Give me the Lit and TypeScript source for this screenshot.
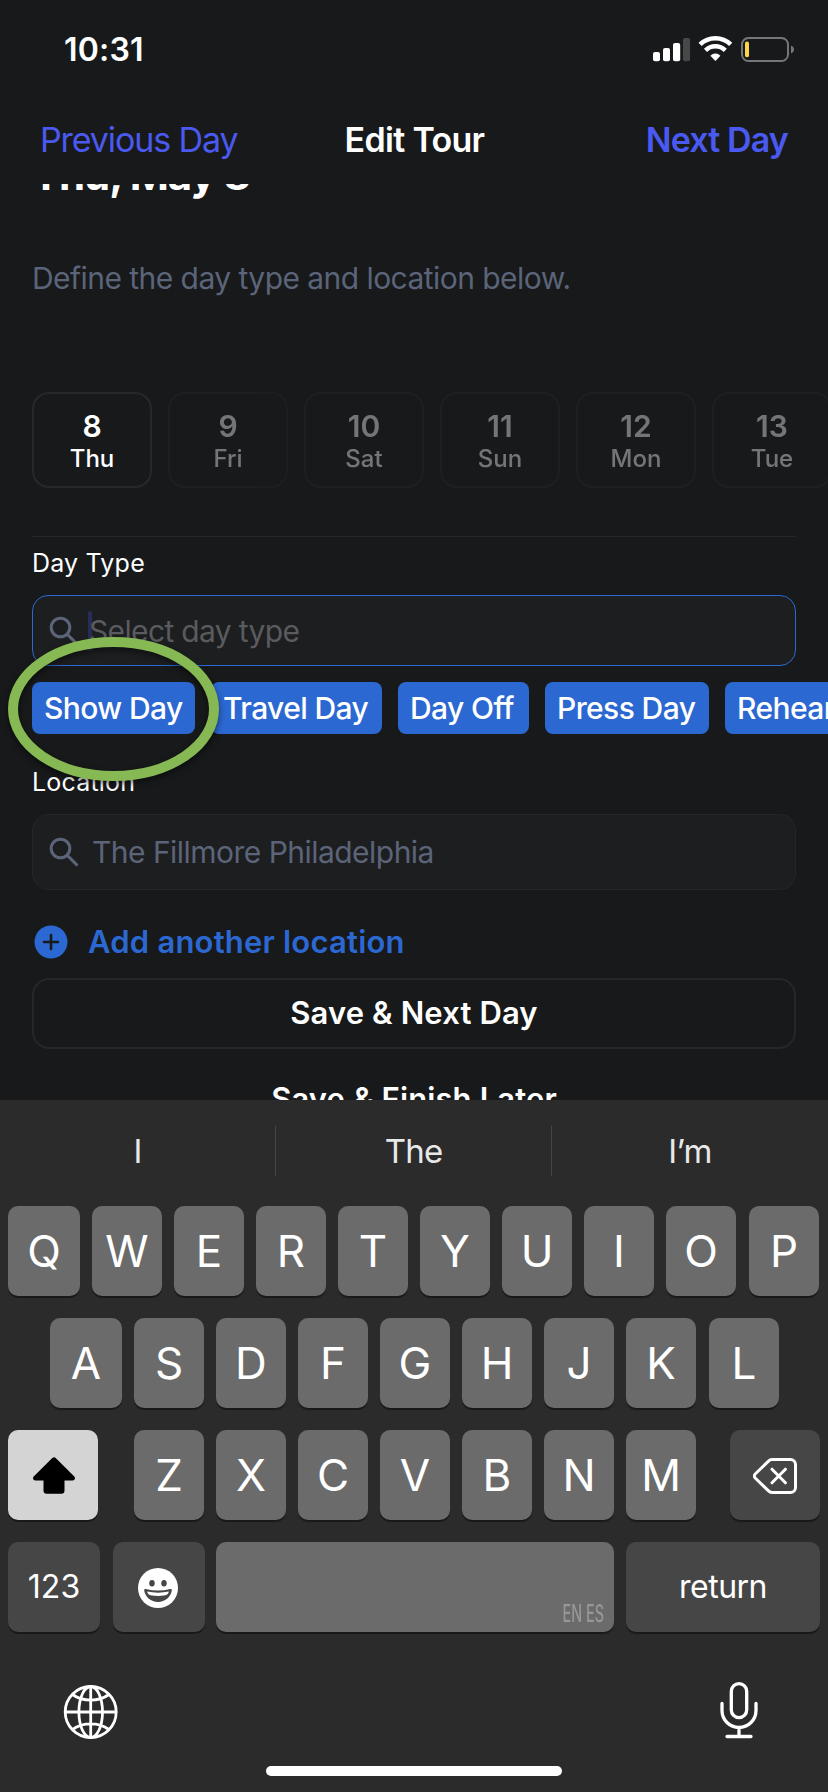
import { LitElement, html, css } from "lit";
import { customElement } from "lit/decorators.js";
import { classMap } from "lit/directives/class-map.js";

const searchIcon = html`<svg class="search" width="30" height="30" viewBox="0 0 30 30" fill="none" stroke="#5b6479" stroke-width="3" stroke-linecap="round">
  <circle cx="11.5" cy="11.5" r="9.3"></circle><path d="M18.2 18.2 27.6 27.6"></path>
</svg>`;

@customElement("tour-screen")
export class TourScreen extends LitElement {
  static styles = css`
    :host { display: flex; flex-direction: column; height: 1100px; overflow: hidden; background: #17191a; color: #fff; }
    * { box-sizing: border-box; }
    svg { display: block; flex: none; }
    .status { display: flex; align-items: center; justify-content: space-between; height: 100px; padding: 0 33px 0 64px; flex: none; }
    .time { font-size: 32px; font-weight: 600; letter-spacing: 0.2px; line-height: 40px; }
    .nav { display: grid; grid-template-columns: 1fr auto 1fr; align-items: center; height: 84px; flex: none; padding: 0 40px 4px; font-size: 34px; line-height: 44px; font-weight: 600; }
    .prev { color: #4a5af0; font-weight: 400; letter-spacing: -1.1px; }
    .title { letter-spacing: -0.7px; padding-left: 1px; }
    .next { color: #4a5af0; letter-spacing: -0.88px; text-align: right; }
    .body { flex: 1; min-height: 0; overflow: hidden; padding-left: 32px; }
    .date { margin-top: -29px; font-size: 42px; font-weight: 700; line-height: 40px; letter-spacing: -1.05px; }
    .hint { margin-top: 63px; font-size: 30px; line-height: 41px; letter-spacing: -0.55px; color: #5b6479; }
    .days { display: flex; gap: 16px; margin-top: 93px; }
    .day { flex: none; width: 120px; height: 96px; border: 2px solid #262829; border-radius: 17px; padding-top: 16px; text-align: center; font-weight: 500; font-size: 24px; line-height: 32px; opacity: 0.4; }
    .day b { display: block; font-size: 30px; font-weight: 600; line-height: 33px; }
    .day.on { opacity: 1; }
    .rule { width: 764px; height: 1px; margin-top: 48px; background: #252728; }
    .label { margin-top: 10px; font-size: 25px; line-height: 32px; letter-spacing: 0.2px; }
    .label.loc { margin-top: 32px; }
    .field { display: flex; align-items: center; width: 764px; height: 71px; margin-top: 16px; padding-left: 16px; border: 1px solid #2c68d2; border-radius: 16px; background: #1d1e20; font-size: 30px; line-height: 40px; }
    .field.tall { height: 76px; border-color: #242628; color: #5b6479; letter-spacing: -0.53px; }
    .field.tall span { margin-left: 13px; }
    .field.focus { color: #5a5b5e; letter-spacing: -0.65px; }
    .caret { width: 4px; height: 40px; margin-left: 9px; margin-right: -3px; border-radius: 2px; background: #272d57; }
    .chips { display: flex; gap: 16px; margin-top: 16px; }
    .chip { flex: none; height: 52px; border-radius: 8px; background: #2c68d2; font-size: 30px; font-weight: 500; line-height: 52px; white-space: nowrap; letter-spacing: -0.6px; padding-left: 12px; }
    .add { display: flex; align-items: center; gap: 20px; height: 40px; margin-top: 32px; padding-left: 2px; color: #2c68d2; font-size: 31px; font-weight: 580; line-height: 40px; letter-spacing: 0.2px; }
    .btn { width: 764px; height: 71px; margin-top: 16px; border: 2px solid #252729; border-radius: 17px; text-align: center; font-size: 31px; line-height: 66px; font-weight: 600; letter-spacing: 0.12px; }
    .btn.plain { border-color: transparent; margin-top: 15px; }
    .ring { position: absolute; left: 0; top: 629px; filter: drop-shadow(0 3px 3px rgba(0, 0, 0, 0.5)); }
  `;
  days: [number, string][] = [[8, "Thu"], [9, "Fri"], [10, "Sat"], [11, "Sun"], [12, "Mon"], [13, "Tue"]];
  chips: [string, number][] = [["Show Day", 163], ["Travel Day", 171], ["Day Off", 131], ["Press Day", 164], ["Rehearsal", 160]];
  render() {
    return html`
      <div class="status">
        <span class="time">10:31</span>
        <svg width="144" height="30" viewBox="0 0 144 30">
          <g fill="#fff">
            <rect x="2" y="17" width="7" height="9.3" rx="2"></rect>
            <rect x="12" y="13" width="7" height="13.3" rx="2"></rect>
            <rect x="22" y="8" width="7.2" height="18.3" rx="2"></rect>
            <rect x="32" y="3" width="7" height="23.3" rx="2" fill="#47484a"></rect>
          </g>
          <g fill="none" stroke="#fff">
            <path d="M49.100 9.400a22 22 0 0 1 30.600 0" stroke-width="4.600"></path>
            <path d="M54.500 15.400a14 14 0 0 1 19.800 0" stroke-width="4.400"></path>
          </g>
          <path d="M59.700 20.700a6.800 6.800 0 0 1 9.400 0L64.400 25.800z" fill="#fff" stroke="#fff" stroke-width=".6"></path>
          <rect x="91" y="3" width="46" height="23" rx="6.500" fill="none" stroke="#747677" stroke-width="2"></rect>
          <rect x="94" y="6.600" width="4" height="15.600" rx="1.800" fill="#fcd54a"></rect>
          <path d="M140 10.500c4 1.600 4 6.400 0 8z" fill="#747677"></path>
        </svg>
      </div>
      <div class="nav"><span class="prev">Previous Day</span><span class="title">Edit Tour</span><span class="next">Next Day</span></div>
      <div class="body">
        <div class="date">Thu, May 8</div>
        <div class="hint">Define the day type and location below.</div>
        <div class="days">${this.days.map(([n, d], i) => html`<div class=${classMap({ day: true, on: i === 0 })}><b>${n}</b>${d}</div>`)}</div>
        <div class="rule"></div>
        <div class="label">Day Type</div>
        <div class="field focus">${searchIcon}<i class="caret"></i><span>Select day type</span></div>
        <div class="chips">${this.chips.map(([t, w]) => html`<div class="chip" style="width:${w}px">${t}</div>`)}</div>
        <div class="label loc">Location</div>
        <div class="field tall">${searchIcon}<span>The Fillmore Philadelphia</span></div>
        <div class="add">
          <svg width="34" height="34" viewBox="0 0 34 34"><circle cx="17" cy="17" r="16.500" fill="#2c68d2"></circle><path d="M17 10v14M10 17h14" stroke="#17191a" stroke-width="2.600" stroke-linecap="round"></path></svg>
          <span>Add another location</span>
        </div>
        <div class="btn">Save &amp; Next Day</div>
        <div class="btn plain">Save &amp; Finish Later</div>
      </div>
      <svg class="ring" width="230" height="160" viewBox="0 0 230 160"><ellipse cx="113.500" cy="80" rx="100.500" ry="67" fill="none" stroke="#86b854" stroke-width="10"></ellipse></svg>
    `;
  }
}

@customElement("key-board")
export class KeyBoard extends LitElement {
  static styles = css`
    :host { display: flex; flex-direction: column; height: 692px; background: #2b2b2b; color: #fff; }
    * { box-sizing: border-box; }
    svg { display: block; flex: none; }
    .suggest { display: grid; grid-template-columns: 275px 1fr 277px; height: 106px; flex: none; padding: 26px 0 30px; font-size: 33px; line-height: 50px; text-align: center; color: #e8e8e8; letter-spacing: -0.8px; font-weight: 380; }
    .suggest span + span { border-left: 1px solid #454547; }
    .row { display: flex; gap: 12px; height: 90px; margin-bottom: 22px; padding: 0 8px; flex: none; }
    .row.two { padding-left: 50px; }
    .key { display: flex; align-items: center; justify-content: center; width: 70px; height: 90px; border-radius: 10px; background: #6b6b6b; box-shadow: 0 2px 0 #191919; font-size: 44px; font-weight: 390; line-height: 91px; }
    .w72 { width: 72px; }
    .off1 { margin-left: 1px; }
    .fn { background: #464646; font-size: 32px; line-height: 90px; }
    .w90 { width: 90px; }
    .shift { background: #d4d4d4; margin-right: 24px; padding: 1px 0 0 2px; }
    .del { margin-left: 22px; padding-top: 1px; }
    .w92 { width: 92px; }
    .emoji { margin-left: 1px; margin-right: -1px; padding: 1px 3px 0 0; }
    .space { width: 398px; align-items: flex-end; justify-content: flex-end; padding: 0 10px 3px; }
    .lang { font-size: 24px; font-weight: 500; line-height: 30px; color: #979797; transform: scaleX(0.6); transform-origin: right center; white-space: nowrap; }
    .ret { width: 194px; letter-spacing: -0.5px; }
    .tools { display: flex; justify-content: space-between; align-items: center; height: 66px; margin-top: 25px; padding: 0 69px 0 62px; flex: none; }
    .home { width: 296px; height: 10px; margin: 21px auto 0; border-radius: 5px; background: #fff; }
  `;
  keys(s: string) {
    return [...s].map((k, i) => html`<div class=${classMap({ key: true, w72: i === 0 && s.length > 7, off1: k === "P" || k === "L" })}>${k}</div>`);
  }
  render() {
    return html`
      <div class="suggest"><span>I</span><span>The</span><span>I’m</span></div>
      <div class="row">${this.keys("QWERTYUIOP")}</div>
      <div class="row two">${this.keys("ASDFGHJKL")}</div>
      <div class="row">
        <div class="key w90 shift"><svg width="42" height="37" viewBox="0 0 42 37"><path d="M19.300 1a2.500 2.500 0 0 1 3.400 0L41.300 19.600c1.400 1.600.5 4-1.700 4H31.500v10a3.200 3.200 0 0 1-3.200 3.200H13.700A3.200 3.200 0 0 1 10.500 33.600v-10H2.400c-2.200 0-3.100-2.400-1.700-4z" fill="#000"></path></svg></div>
        ${this.keys("ZXCVBNM")}
        <div class="key fn w90 del"><svg width="44" height="36" viewBox="0 0 44 36" fill="none" stroke="#fff" stroke-width="3" stroke-linecap="round" stroke-linejoin="round"><path d="M19 1.600H37.500a5 5 0 0 1 5 5V29.400a5 5 0 0 1-5 5H19a5 5 0 0 1-3.500-1.500L2.200 20a2.800 2.800 0 0 1 0-4L15.500 3.100A5 5 0 0 1 19 1.600zM19 11.200 32.400 24.800M32.400 11.200 19 24.800"></path></svg></div>
      </div>
      <div class="row">
        <div class="key fn w92">123</div>
        <div class="key fn w92 emoji"><svg width="40" height="40" viewBox="0 0 40 40"><circle cx="20" cy="20" r="20" fill="#fff"></circle><g fill="#464646"><ellipse cx="14" cy="15.300" rx="2.700" ry="3.200"></ellipse><ellipse cx="26" cy="15.300" rx="2.700" ry="3.200"></ellipse><path d="M7.800 21c-1.100-.3-1.800.4-1.600 1.600C7.300 29.300 13 34 20 34s12.700-4.700 13.800-11.400c.2-1.200-.5-1.900-1.600-1.600-8 2-16.400 2-24.400 0z"></path></g><path d="M9.200 23.500c7 1.500 14.600 1.500 21.600 0-.2 2.300-1.500 3.300-3.400 3.700-4.800 1-10 1-14.800 0-1.900-.4-3.200-1.400-3.400-3.700z" fill="#fff"></path></svg></div>
        <div class="key space"><span class="lang">EN ES</span></div>
        <div class="key fn ret">return</div>
      </div>
      <div class="tools">
        <svg width="58" height="58" viewBox="0 0 58 58" fill="none" stroke="#fff" stroke-width="2.800"><circle cx="28.700" cy="29" r="25.500"></circle><ellipse cx="28.700" cy="29" rx="11.800" ry="25.500"></ellipse><path d="M28.700 3.500v51M3.200 29h51M10.500 11.500c10.500 7.600 26 7.600 36.400 0M10.500 46.500c10.500-7.600 26-7.600 36.400 0"></path></svg>
        <svg width="40" height="60" viewBox="0 0 40 60" fill="none" stroke="#fff" stroke-width="3.300" stroke-linecap="round"><rect x="12.300" y="1.700" width="15.400" height="34" rx="7.700"></rect><path d="M3 21.500v7a17 17 0 0 0 34 0v-7M20 45.500v8.700M8 54.500h24"></path></svg>
      </div>
      <div class="home"></div>
    `;
  }
}

@customElement("app-root")
export class AppRoot extends LitElement {
  static styles = css`
    :host { display: block; position: relative; width: 828px; height: 1792px; overflow: hidden; font-family: Inter, "Noto Sans", sans-serif; }
  `;
  render() {
    return html`<tour-screen></tour-screen><key-board></key-board>`;
  }
}
